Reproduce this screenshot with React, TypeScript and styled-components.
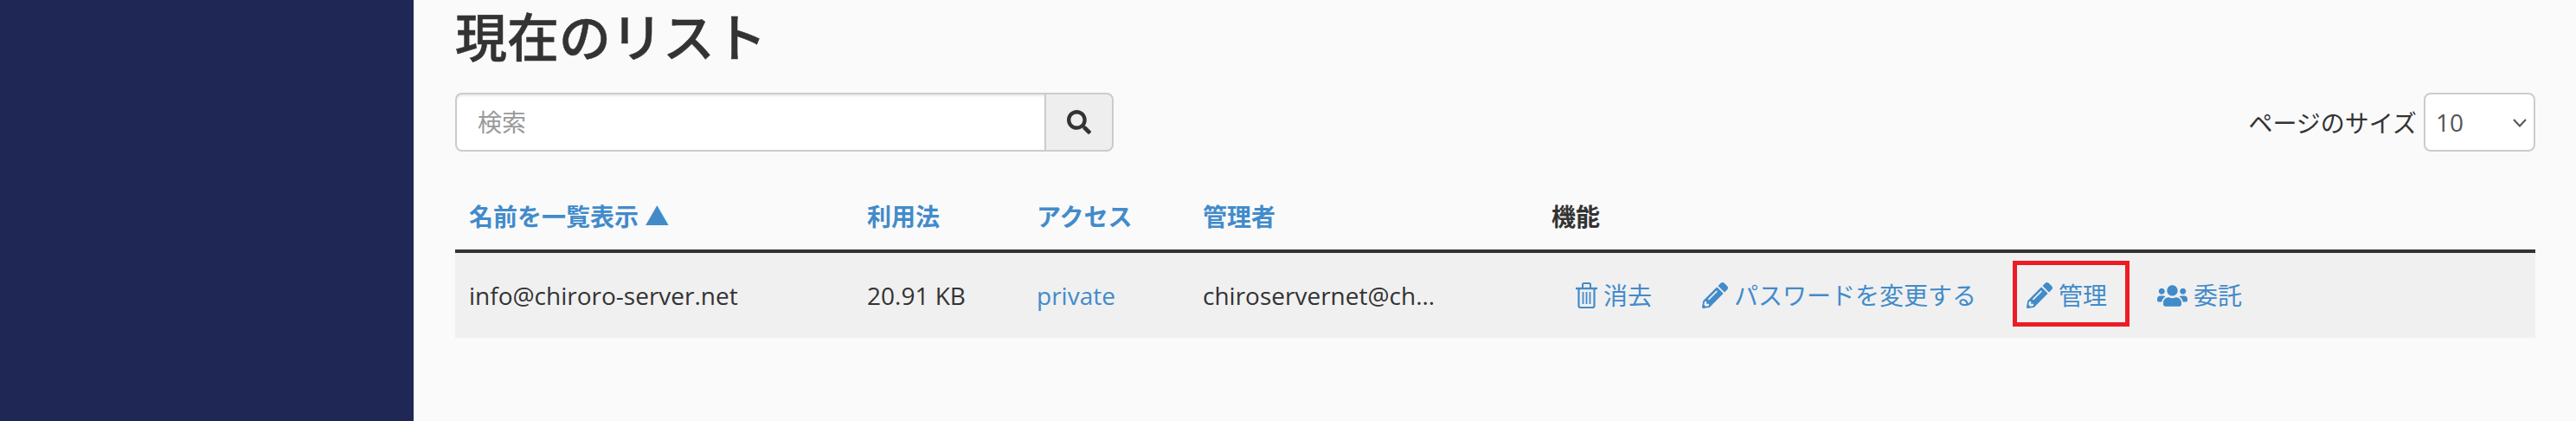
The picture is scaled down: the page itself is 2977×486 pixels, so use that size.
import React from "react";
import styled, { createGlobalStyle } from "styled-components";
import { FaPencilAlt, FaSearch, FaUsers } from "react-icons/fa";

const GlobalStyle = createGlobalStyle`
  html, body {
    margin: 0;
    padding: 0;
    background: #fafafa;
  }
  body {
    font-family: "Open Sans", "Noto Sans CJK JP", sans-serif;
    font-size: 28px;
    color: #333;
  }
`;

const TrashIcon: React.FC = () => (
  <svg width="25" height="30" viewBox="0 0 25 30" fill="none" stroke="currentColor">
    <path d="M8 6V2.5Q8 1 9.5 1H15.5Q17 1 17 2.5V6" strokeWidth="2" />
    <path d="M0 7H25" strokeWidth="2.4" />
    <path d="M3.5 7V27Q3.5 29 5.5 29H19.5Q21.5 29 21.5 27V7" strokeWidth="2.2" />
    <path d="M8.5 11V25M12.5 11V25M16.5 11V25" strokeWidth="1.8" />
  </svg>
);

const App: React.FC = () => {
  return (
    <Page>
      <GlobalStyle />
      <Sidebar />
      <Main>
        <Title>現在のリスト</Title>
        <Toolbar>
          <SearchGroup>
            <SearchInput placeholder="検索" />
            <SearchButton>
              <FaSearch />
            </SearchButton>
          </SearchGroup>
          <PageSize>
            ページのサイズ
            <SelectWrap>
              <SizeSelect defaultValue="10">
                <option value="10">10</option>
              </SizeSelect>
              <Chevron width="16" height="10" viewBox="0 0 16 10">
                <path d="M1 1L8 8.5L15 1" fill="none" stroke="#555" strokeWidth="2" />
              </Chevron>
            </SelectWrap>
          </PageSize>
        </Toolbar>
        <Table>
          <thead>
            <tr>
              <HeadCell $width={460}>
                <HeadLink>名前を一覧表示 ▲</HeadLink>
              </HeadCell>
              <HeadCell $width={196}>
                <HeadLink>利用法</HeadLink>
              </HeadCell>
              <HeadCell $width={192}>
                <HeadLink>アクセス</HeadLink>
              </HeadCell>
              <HeadCell $width={403}>
                <HeadLink>管理者</HeadLink>
              </HeadCell>
              <HeadCell>機能</HeadCell>
            </tr>
          </thead>
          <tbody>
            <Row>
              <Cell>info@chiroro-server.net</Cell>
              <Cell>20.91 KB</Cell>
              <Cell>
                <TextLink>private</TextLink>
              </Cell>
              <Cell>chiroservernet@ch...</Cell>
              <Cell>
                <Actions>
                  <ActionLink>
                    <TrashIcon />
                    消去
                  </ActionLink>
                  <ActionLink>
                    <FaPencilAlt size={30} />
                    パスワードを変更する
                  </ActionLink>
                  <ActionLink $marked>
                    <FaPencilAlt size={30} />
                    管理
                  </ActionLink>
                  <ActionLink>
                    <FaUsers size={35} />
                    委託
                  </ActionLink>
                </Actions>
              </Cell>
            </Row>
          </tbody>
        </Table>
      </Main>
    </Page>
  );
};

const Page = styled.div`
  display: flex;
  width: 2977px;
  height: 486px;
  overflow: hidden;
`;

const Sidebar = styled.div`
  width: 478px;
  flex-shrink: 0;
  background: #1f2855;
`;

const Main = styled.div`
  flex: 1;
  padding: 0 47px 0 48px;
`;

const Title = styled.h2`
  margin: 0;
  height: 107px;
  font-size: 60px;
  font-weight: 500;
  line-height: 86px;
  -webkit-text-stroke: 0.5px #333;
`;

const Toolbar = styled.div`
  display: flex;
  justify-content: space-between;
  align-items: center;
`;

const SearchGroup = styled.div`
  display: flex;
  width: 761px;
  height: 68px;
  box-sizing: border-box;
`;

const SearchInput = styled.input`
  flex: 1;
  min-width: 0;
  box-sizing: border-box;
  padding: 0 24px;
  border: 2px solid #ccc;
  border-right: 0;
  border-radius: 8px 0 0 8px;
  background: #fff;
  box-shadow: inset 0 2px 2px rgba(0, 0, 0, 0.075);
  font: inherit;
  color: #555;
  outline: none;

  &::placeholder {
    color: #999;
  }
`;

const SearchButton = styled.button`
  display: flex;
  align-items: center;
  justify-content: center;
  width: 80px;
  padding: 0;
  border: 2px solid #ccc;
  border-radius: 0 8px 8px 0;
  background: #eee;
  color: #333;
  font-size: 28px;
`;

const PageSize = styled.label`
  display: flex;
  align-items: center;
  gap: 8px;
`;

const SelectWrap = styled.div`
  position: relative;
  display: flex;
`;

const SizeSelect = styled.select`
  appearance: none;
  width: 129px;
  height: 68px;
  box-sizing: border-box;
  padding: 0 12px;
  border: 2px solid #ccc;
  border-radius: 8px;
  background: #fff;
  font: inherit;
  color: #555;
`;

const Chevron = styled.svg`
  position: absolute;
  right: 10px;
  top: 30px;
  pointer-events: none;
`;

const Table = styled.table`
  width: 100%;
  margin-top: 26px;
  border-collapse: collapse;
  table-layout: fixed;
`;

const HeadCell = styled.th<{ $width?: number }>`
  ${(p) => (p.$width ? `width: ${p.$width}px;` : "")}
  height: 89px;
  padding: 8px 16px 0;
  border-bottom: 4px solid #333;
  box-sizing: border-box;
  text-align: left;
  font-weight: 700;
`;

const HeadLink = styled.a`
  color: #428bca;
`;

const Row = styled.tr`
  height: 100px;
  background: #f0f0f0;
`;

const Cell = styled.td`
  padding: 0 16px;
  white-space: nowrap;
`;

const TextLink = styled.a`
  color: #428bca;
`;

const Actions = styled.div`
  display: flex;
  align-items: center;
  gap: 58px;
  padding-left: 28px;
`;

const ActionLink = styled.a<{ $marked?: boolean }>`
  position: relative;
  display: flex;
  align-items: center;
  gap: 7px;
  line-height: 40px;
  color: #428bca;

  ${(p) =>
    p.$marked
      ? `&::after {
          content: "";
          position: absolute;
          left: -16px;
          right: -26px;
          top: -20px;
          bottom: -16px;
          border: 5px solid #ed1c24;
        }`
      : ""}
`;

export default App;
